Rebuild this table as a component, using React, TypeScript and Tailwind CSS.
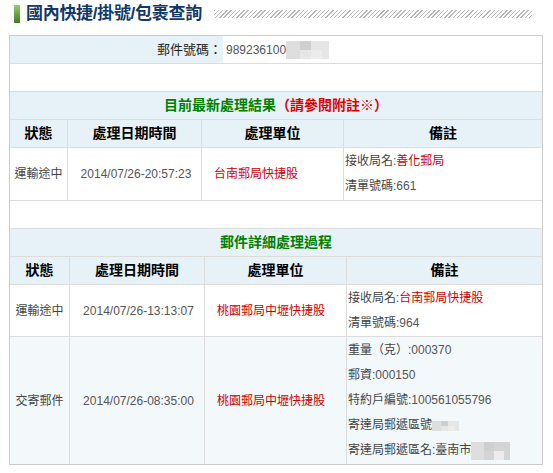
const font = "font-['Liberation_Sans','Noto_Sans_CJK_TC',sans-serif]";

function Blur({ w, h, dark = false }: { w: number; h: number; dark?: boolean }) {
  return (
    <span
      className={`inline-flex align-middle ${dark ? "bg-[#d4d4d4]" : "bg-[#e6e6e6]"}`}
      style={{ width: w, height: h }}
    >
      <span className="h-full w-1/3 bg-[#dedede]" />
      <span className="h-1/2 w-1/4 bg-[#cfcfcf]" />
      <span className="mt-auto h-1/2 w-1/4 bg-[#ececec]" />
    </span>
  );
}

function HeaderRow({ cols }: { cols: string }) {
  const cell = "flex items-center justify-center border-l border-[#dcdcdc] text-[14px] font-bold text-black";
  return (
    <div className={`grid h-[28px] border-b border-[#dcdcdc] bg-[#e7f2f8] ${cols}`}>
      <div className="flex items-center justify-center text-[14px] font-bold text-black">狀態</div>
      <div className={cell}>處理日期時間</div>
      <div className={cell}>處理單位</div>
      <div className={cell}>備註</div>
    </div>
  );
}

function DataRow({
  cols,
  status,
  date,
  unit,
  notes,
  height,
  bg = "bg-white",
  last = false,
}: {
  cols: string;
  status: string;
  date: string;
  unit: string;
  notes: React.ReactNode;
  height: string;
  bg?: string;
  last?: boolean;
}) {
  return (
    <div className={`grid ${height} ${bg} ${last ? "" : "border-b border-[#dcdcdc]"} ${cols} text-[12px]`}>
      <div className="flex items-center justify-center text-[#444]">{status}</div>
      <div className="flex items-center justify-center border-l border-[#dcdcdc] pl-[3px] text-[#555]">{date}</div>
      <div className="flex items-center border-l border-[#dcdcdc] pl-[12px] text-[#c00]">{unit}</div>
      <div className="flex flex-col justify-center border-l border-[#dcdcdc] pl-[1px] leading-[25px] text-[#444]">{notes}</div>
    </div>
  );
}

function SectionTitle({ children }: { children: React.ReactNode }) {
  return (
    <div className="flex h-[28px] items-center justify-center border-b border-[#dcdcdc] bg-[#e7f2f8] text-[14px] font-bold text-[#008000]">
      {children}
    </div>
  );
}

export default function App() {
  const c1 = "grid-cols-[57px_134px_142px_1fr]";
  const c2 = "grid-cols-[59px_135px_142px_1fr]";
  return (
    <div className={`h-[473px] w-[553px] bg-white ${font}`}>
      <div className="flex h-[28px] items-center pl-[14px]">
        <div className="h-[18px] w-[6px] bg-gradient-to-b from-[#9ccc6a] to-[#3f7d26]" />
        <h1 className="ml-[6px] text-[17px] font-bold tracking-[-0.3px] text-[#11386b]">國內快捷/掛號/包裹查詢</h1>
        <div className="ml-[12px] h-[8px] w-[318px] bg-[repeating-linear-gradient(135deg,#b8b8b8_0px,#b8b8b8_1px,transparent_1px,transparent_3px)]" />
      </div>

      <div className="ml-[9px] mt-[7px] w-[534px] border border-[#cccccc]">
        <div className="flex h-[28px] border-b border-[#dcdcdc] text-[13px]">
          <div className="flex w-[213px] items-center justify-end bg-[#e7f2f8] pr-[1px] text-[#222]">郵件號碼：</div>
          <div className="flex items-center pl-[3px] text-[12px] text-[#555]">
            989236100
            <Blur w={43} h={18} />
          </div>
        </div>
        <div className="h-[28px] border-b border-[#dcdcdc]" />

        <SectionTitle>
          目前最新處理結果<span className="text-[#e00000]">（請參閱附註※）</span>
        </SectionTitle>
        <HeaderRow cols={c1} />
        <DataRow
          cols={c1}
          height="h-[53px]"
          status="運輸途中"
          date="2014/07/26-20:57:23"
          unit="台南郵局快捷股"
          notes={
            <>
              <div>
                接收局名:<span className="text-[#c00]">善化郵局</span>
              </div>
              <div>
                清單號碼:<span className="text-[#555]">661</span>
              </div>
            </>
          }
        />
        <div className="h-[28px] border-b border-[#dcdcdc]" />

        <SectionTitle>郵件詳細處理過程</SectionTitle>
        <HeaderRow cols={c2} />
        <DataRow
          cols={c2}
          height="h-[52px]"
          status="運輸途中"
          date="2014/07/26-13:13:07"
          unit="桃園郵局中壢快捷股"
          notes={
            <>
              <div>
                接收局名:<span className="text-[#c00]">台南郵局快捷股</span>
              </div>
              <div>
                清單號碼:<span className="text-[#555]">964</span>
              </div>
            </>
          }
        />
        <DataRow
          cols={c2}
          height="h-[127px]"
          bg="bg-[#f3f8fb]"
          last
          status="交寄郵件"
          date="2014/07/26-08:35:00"
          unit="桃園郵局中壢快捷股"
          notes={
            <>
              <div>
                重量（克）:<span className="text-[#555]">000370</span>
              </div>
              <div>
                郵資:<span className="text-[#555]">000150</span>
              </div>
              <div>
                特約戶編號:<span className="text-[#555]">100561055796</span>
              </div>
              <div className="flex items-center">
                寄達局郵遞區號
                <Blur w={27} h={10} />
              </div>
              <div className="flex items-center">
                寄達局郵遞區名:臺南市
                <Blur w={39} h={18} dark />
              </div>
            </>
          }
        />
      </div>
    </div>
  );
}
